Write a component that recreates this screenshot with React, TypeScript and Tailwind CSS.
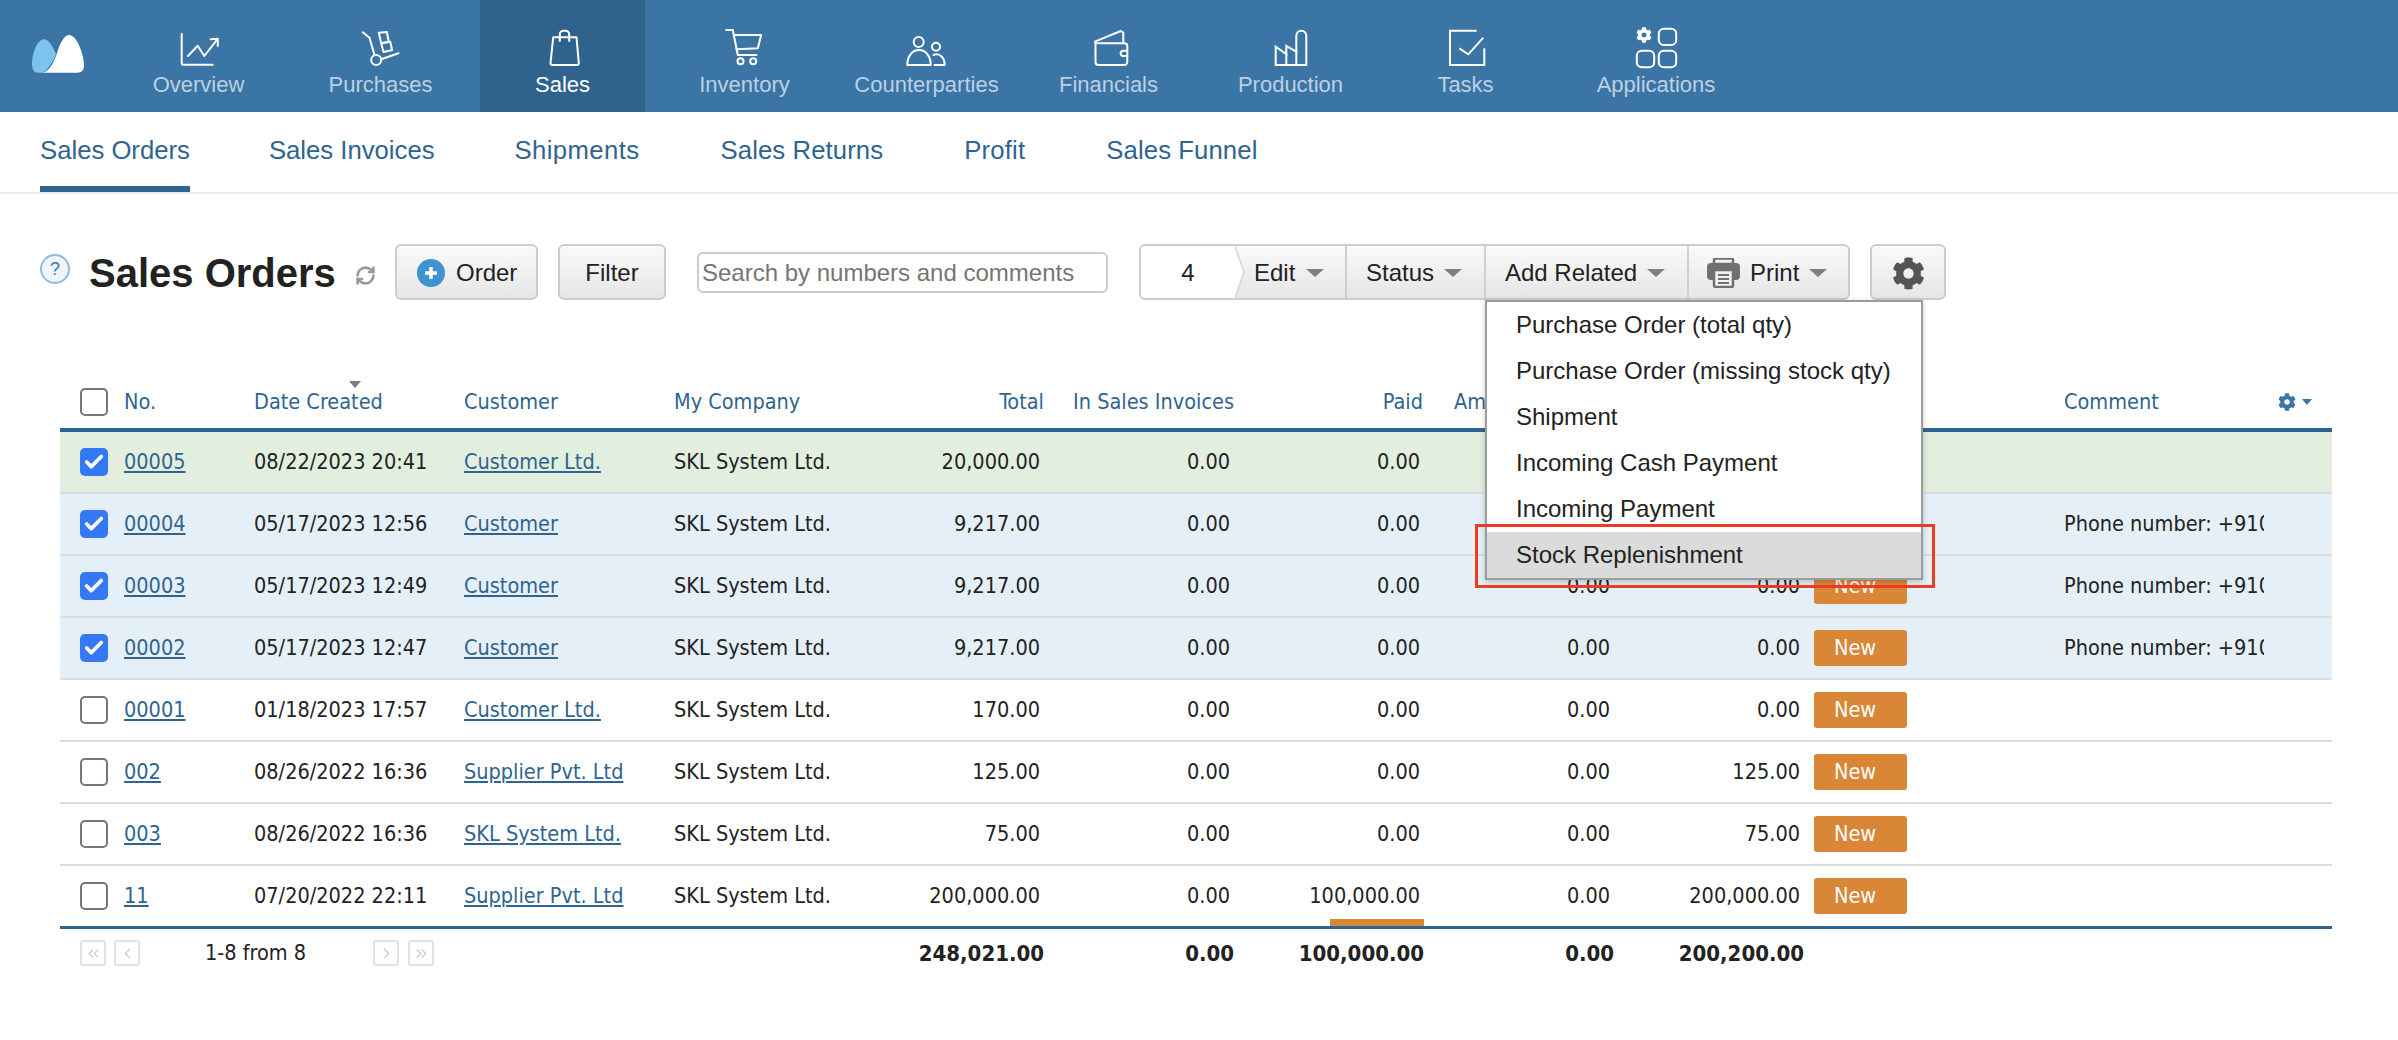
import { Check, ChevronLeft, ChevronRight, ChevronsLeft, ChevronsRight, RefreshCw } from "lucide-react";
import type { ReactNode } from "react";
import { FaCog } from "react-icons/fa";

const COLS = "grid grid-cols-[64px_130px_210px_210px_226px_150px_190px_190px_190px_190px_254px_268px]";

const line = { fill: "none", stroke: "#fff", strokeWidth: 2, strokeLinecap: "round", strokeLinejoin: "round" } as const;

const NAV: { label: string; width: string; active?: boolean; icon: ReactNode }[] = [
  {
    label: "Overview",
    width: "w-[165px]",
    icon: (
      <g {...line}>
        <path d="M-17.3 34V63.5a1.2 1.2 0 0 0 1.2 1.2H13.7" />
        <path d="M-11 56L-1.3 45.7L5.3 56L18.3 39.3" />
        <path d="M11.7 39.3L18.8 38.7V46" />
      </g>
    ),
  },
  {
    label: "Purchases",
    width: "w-[165px]",
    icon: (
      <g {...line}>
        <circle cx="-4.8" cy="60" r="5" />
        <path d="M-18.2 32.3L-11.5 37.7L-6.5 55" />
        <path d="M0.2 59.3L17.5 53.3" />
        <path d="M-2.2 32.7L5.8 32L7.8 41.7L0.2 43.3Z" />
        <path d="M0.2 43.3L9.2 41.7L11.2 50L2.5 52Z" />
      </g>
    ),
  },
  {
    label: "Sales",
    width: "w-[165px]",
    active: true,
    icon: (
      <g {...line}>
        <path d="M-9.8 37.3H13.5L15.8 63a2 2 0 0 1 -2 2H-10.5a2 2 0 0 1 -2 -2Z" />
        <path d="M-3.2 41V34.5a3.8 3.8 0 0 1 3.8 -3.8h1.8a3.8 3.8 0 0 1 3.8 3.8V41" />
      </g>
    ),
  },
  {
    label: "Inventory",
    width: "w-[165px]",
    icon: (
      <g {...line}>
        <path d="M-18.8 30H-12.2L-7.2 55H11.5" />
        <path d="M-11.2 35H16.2L12.8 48.3L-8.5 49.3" />
        <circle cx="-4.5" cy="61.3" r="3" />
        <circle cx="8.2" cy="61.3" r="3" />
      </g>
    ),
  },
  {
    label: "Counterparties",
    width: "w-[165px]",
    icon: (
      <g {...line}>
        <circle cx="-8.3" cy="42" r="5" />
        <path d="M-19.7 65C-19.7 56 -14.5 50 -8 50C-1.5 50 3.7 56 3.7 65Z" />
        <circle cx="9" cy="46.7" r="4" />
        <path d="M6.5 55C11 53 17.7 56 17.7 65H7.5" />
      </g>
    ),
  },
  {
    label: "Financials",
    width: "w-[165px]",
    icon: (
      <g {...line}>
        <path d="M-13.5 42V62a3 3 0 0 0 3 3H15.3a3 3 0 0 0 3 -3V46.3a3 3 0 0 0 -3 -3H-11.5" />
        <path d="M-14 41.7L11.7 31L14.3 32.7V42.7" />
        <path d="M18.3 50.7H14.3a2.6 2.6 0 0 0 0 5.3H18.3" />
      </g>
    ),
  },
  {
    label: "Production",
    width: "w-[165px]",
    icon: (
      <g {...line} strokeLinecap="square" strokeLinejoin="miter">
        <path d="M-15.3 65V46.7L-4.7 54V46L5.3 51.7V35.7a5 5 0 0 1 10 0V65Z" />
        <path d="M-4.7 54V65" />
        <path d="M5.3 51.7V65" />
      </g>
    ),
  },
  {
    label: "Tasks",
    width: "w-[151px]",
    icon: (
      <g {...line} strokeLinecap="butt" strokeLinejoin="miter">
        <path d="M10.7 30.7H-16V65H18.3V48.3" />
        <path d="M-6.7 48.3L2.3 54.3L17.3 37.7" />
      </g>
    ),
  },
  {
    label: "Applications",
    width: "w-[196px]",
    icon: (
      <>
        <FaCog x={-20} y={27} width={20} height={20} fill="#fff" />
        <g {...line}>
          <rect x="2.8" y="28.7" width="17.4" height="16.3" rx="5" />
          <rect x="-19.2" y="50.7" width="17.4" height="16.6" rx="5" />
          <rect x="2.8" y="50.7" width="17.4" height="16.6" rx="5" />
        </g>
      </>
    ),
  },
];

// gaps differ a little per tab, the original font has other advance widths
const TABS = [
  { label: "Sales Orders", cls: "" },
  { label: "Sales Invoices", cls: "ml-[79px]" },
  { label: "Shipments", cls: "ml-[80px] tracking-[0.4px]" },
  { label: "Sales Returns", cls: "ml-[81px] tracking-[0.1px]" },
  { label: "Profit", cls: "ml-[81px] tracking-[0.2px]" },
  { label: "Sales Funnel", cls: "ml-[81px] tracking-[0.1px]" },
];

const MENU = ["Purchase Order (total qty)", "Purchase Order (missing stock qty)", "Shipment", "Incoming Cash Payment", "Incoming Payment", "Stock Replenishment"];

const PHONE = "Phone number: +91012345678";

const ROWS = [
  { no: "00005", date: "08/22/2023 20:41", customer: "Customer Ltd.", total: "20,000.00", paid: "0.00", due: "0.00", checked: true, bg: "bg-[#e2efdf]", comment: "" },
  { no: "00004", date: "05/17/2023 12:56", customer: "Customer", total: "9,217.00", paid: "0.00", due: "0.00", checked: true, bg: "bg-[#e5eff8]", comment: PHONE },
  { no: "00003", date: "05/17/2023 12:49", customer: "Customer", total: "9,217.00", paid: "0.00", due: "0.00", checked: true, bg: "bg-[#e5eff8]", comment: PHONE },
  { no: "00002", date: "05/17/2023 12:47", customer: "Customer", total: "9,217.00", paid: "0.00", due: "0.00", checked: true, bg: "bg-[#e5eff8]", comment: PHONE },
  { no: "00001", date: "01/18/2023 17:57", customer: "Customer Ltd.", total: "170.00", paid: "0.00", due: "0.00", checked: false, bg: "", comment: "" },
  { no: "002", date: "08/26/2022 16:36", customer: "Supplier Pvt. Ltd", total: "125.00", paid: "0.00", due: "125.00", checked: false, bg: "", comment: "" },
  { no: "003", date: "08/26/2022 16:36", customer: "SKL System Ltd.", total: "75.00", paid: "0.00", due: "75.00", checked: false, bg: "", comment: "" },
  { no: "11", date: "07/20/2022 22:11", customer: "Supplier Pvt. Ltd", total: "200,000.00", paid: "100,000.00", due: "200,000.00", checked: false, bg: "", comment: "" },
];

function Caret() {
  return <span className="inline-block w-0 h-0 border-x-[9px] border-x-transparent border-t-[8px] border-t-[#808080]" />;
}

function Box({ checked }: { checked: boolean }) {
  if (checked) {
    return (
      <span className="ml-5 w-[28px] h-[28px] rounded-[5px] bg-[#3478f6] flex items-center justify-center">
        <Check size={22} strokeWidth={4} className="text-white" />
      </span>
    );
  }
  return <span className="ml-5 w-[28px] h-[28px] rounded-[5px] border-2 border-[#777] bg-white" />;
}

function PageBtn({ children, className }: { children: ReactNode; className: string }) {
  return <span className={`w-[26px] h-[26px] rounded-[3px] border-2 border-[#e2e2e2] flex items-center justify-center text-[#cfcfcf] ${className}`}>{children}</span>;
}

export default function App() {
  const btn = "h-[56px] rounded-[6px] border-2 border-[#ccc] bg-gradient-to-b from-[#fafafa] to-[#e6e6e6] flex items-center";
  return (
    <div className="relative w-[2398px] h-[1040px] overflow-hidden bg-white text-[#222] font-['Liberation_Sans',sans-serif]">
      <header className="h-[112px] bg-[#3a75a6] flex">
        <svg width="56" height="46" viewBox="30 30 56 46" className="ml-[30px] mt-[30px]">
          <path d="M38 72.7C33 72.7 32 68 32 64C32 54 37 39.3 44 39.3C49 39.3 53 47 56 54C52 64 46 72.7 41 72.7Z" fill="#7cc4ee" />
          <path d="M41.7 72.7C50 72 54 62 58 50C61 41 65 35 69.3 35C77 35 84 55 84 65C84 70 82 72.7 77 72.7Z" fill="#fff" />
        </svg>
        <nav className="ml-[30px] flex gap-[17px]">
          {NAV.map((n) => (
            <div key={n.label} className={`${n.width} h-[112px] pt-[25px] flex flex-col items-center ${n.active ? "bg-[#2f628d] text-white" : "text-[#bcd0e2]"}`}>
              <svg width="60" height="45" viewBox="-30 25 60 45">{n.icon}</svg>
              <span className="mt-[3px] text-[22px] leading-[24px] whitespace-nowrap">{n.label}</span>
            </div>
          ))}
        </nav>
      </header>

      <div className="h-[82px] border-b-2 border-[#ececec] pl-[40px] flex text-[25.7px] text-[#2f6490]">
        {TABS.map((t, i) => (
          <div key={t.label} className={`h-[80px] pt-[23px] leading-[30px] ${t.cls} ${i === 0 ? "border-b-[6px] border-[#2f6490]" : ""}`}>{t.label}</div>
        ))}
      </div>

      <div className="mt-[50px] pl-[40px] h-[56px] flex items-center text-[24px]">
        <span className="mb-[6px] w-[30px] h-[30px] rounded-full border-2 border-[#8dbcdf] bg-[#eef6fc] text-[#3a75a6] text-[18px] flex items-center justify-center">?</span>
        <h1 className="ml-[19px] mt-[2px] w-[245px] text-[40px] font-bold leading-[48px] whitespace-nowrap">Sales Orders</h1>
        <RefreshCw size={21} strokeWidth={3} className="ml-[21px] mt-[6px] text-[#999]" />
        <div className={`${btn} pt-[2px] ml-[19px] w-[143px] pl-[20px] gap-[11px]`}>
          <span className="w-[28px] h-[28px] rounded-full bg-[#3f93d0] flex items-center justify-center">
            <svg width="16" height="16" viewBox="0 0 16 16"><path d="M8 2V14M2 8H14" stroke="#fff" strokeWidth="3.5" /></svg>
          </span>
          <span>Order</span>
        </div>
        <div className={`${btn} pt-[2px] ml-[20px] w-[108px] justify-center`}>Filter</div>
        <input
          readOnly
          placeholder="Search by numbers and comments"
          className="ml-[31px] mt-[1px] w-[411px] h-[41px] rounded-[6px] border-2 border-[#ccc] pl-[3px] pt-[1px] outline-none placeholder:text-[#757575]"
        />
        <div className={`${btn} ml-[31px] w-[711px] overflow-hidden`}>
          <div className="w-[94px] h-full pt-[2px] bg-white flex items-center justify-center">4</div>
          <svg width="10" height="52" viewBox="0 0 10 52" className="shrink-0">
            <path d="M0 0L9 26L0 52Z" fill="#fff" />
            <path d="M0 0L9 26L0 52" fill="none" stroke="#d4d4d4" strokeWidth="1.5" />
          </svg>
          <div className="w-[100px] h-full pt-[2px] pl-[9px] flex items-center gap-[11px]">Edit <Caret /></div>
          <div className="w-[139px] h-full pt-[2px] pl-[19px] border-l-2 border-[#d0d0d0] flex items-center gap-[10px]">Status <Caret /></div>
          <div className="w-[203px] h-full pt-[2px] pl-[19px] border-l-2 border-[#d0d0d0] flex items-center gap-[10px]">Add Related <Caret /></div>
          <div className="flex-1 h-full pt-[2px] pl-[18px] border-l-2 border-[#d0d0d0] flex items-center gap-[10px]">
            <svg width="33" height="30" viewBox="0 0 33 30" className="shrink-0">
              <path d="M7 6V2a1.5 1.5 0 0 1 1.5 -1.5h16A1.5 1.5 0 0 1 26 2V6Z" fill="none" stroke="#707070" strokeWidth="2.5" />
              <rect x="0" y="5" width="33" height="17" rx="4" fill="#707070" />
              <rect x="7" y="12" width="19" height="17" rx="1.5" fill="#f1f1f1" stroke="#707070" strokeWidth="2.5" />
              <path d="M11 17H22M11 21H22M11 25H22" stroke="#707070" strokeWidth="1.8" />
            </svg>
            Print <Caret />
          </div>
        </div>
        <div className={`${btn} pt-[2px] ml-[20px] w-[76px] justify-center`}>
          <FaCog size={33} className="text-[#555]" />
        </div>
      </div>

      <div className="ml-[60px] w-[2272px] mt-[68px] font-['DejaVu_Sans_Condensed','Noto_Sans',sans-serif] text-[21.5px]">
        <div className={`${COLS} h-[64px] pt-[8px] border-b-4 border-[#2f6490] text-[#2f6490] items-center`}>
          <Box checked={false} />
          <span>No.</span>
          <span className="relative">
            Date Created
            <span className="absolute left-[95px] -top-[5px] w-0 h-0 border-x-[6px] border-x-transparent border-t-[7px] border-t-[#777c88]" />
          </span>
          <span>Customer</span>
          <span>My Company</span>
          <span className="text-right pr-[6px]">Total</span>
          <span className="text-right pr-[6px] whitespace-nowrap">In Sales Invoices</span>
          <span className="text-right pr-[7px]">Paid</span>
          <span className="pl-[24px]">Amount</span>
          <span />
          <span />
          <span className="flex items-center justify-end pr-[20px] gap-[6px]">
            <span className="mr-auto">Comment</span>
            <FaCog size={18} className="text-[#3a75a6]" />
            <span className="w-0 h-0 border-x-[5px] border-x-transparent border-t-[6px] border-t-[#3a75a6]" />
          </span>
        </div>

        {ROWS.map((r, i) => {
          const last = i === ROWS.length - 1;
          return (
            <div key={r.no} className={`${COLS} items-center ${r.bg} ${last ? "h-[63px] border-b-[3px] border-[#2f6490]" : "h-[62px] border-b-2 border-[#ddd]"}`}>
              <Box checked={r.checked} />
              <a className="text-[#2f6490] underline decoration-2 underline-offset-2">{r.no}</a>
              <span>{r.date}</span>
              <a className="text-[#2f6490] underline decoration-2 underline-offset-2 whitespace-nowrap">{r.customer}</a>
              <span className="whitespace-nowrap">SKL System Ltd.</span>
              <span className="text-right pr-[10px]">{r.total}</span>
              <span className="text-right pr-[10px]">0.00</span>
              <div className="relative self-stretch flex items-center justify-end pr-[10px]">
                {r.paid}
                {last && <span className="absolute right-[6px] bottom-0 w-[94px] h-[7px] bg-[#d98636]" />}
              </div>
              <span className="text-right pr-[10px]">0.00</span>
              <span className="text-right pr-[10px]">{r.due}</span>
              <span className="ml-[4px] w-[93px] h-[36px] rounded-[3px] bg-[#d98636] text-white pl-[20px] leading-[36px]">New</span>
              <span className="w-[200px] overflow-hidden whitespace-nowrap">{r.comment}</span>
            </div>
          );
        })}

        <div className={`${COLS} h-[48px] items-center`}>
          <span className="col-span-3 flex items-center">
            <PageBtn className="ml-5"><ChevronsLeft size={17} /></PageBtn>
            <PageBtn className="ml-[8px]"><ChevronLeft size={17} /></PageBtn>
            <span className="ml-[65px] w-[168px]">1-8 from 8</span>
            <PageBtn className=""><ChevronRight size={17} /></PageBtn>
            <PageBtn className="ml-[9px]"><ChevronsRight size={17} /></PageBtn>
          </span>
          <span />
          <span />
          <span className="text-right pr-[6px] font-bold text-[22px]">248,021.00</span>
          <span className="text-right pr-[6px] font-bold text-[22px]">0.00</span>
          <span className="text-right pr-[6px] font-bold text-[22px]">100,000.00</span>
          <span className="text-right pr-[6px] font-bold text-[22px]">0.00</span>
          <span className="text-right pr-[6px] font-bold text-[22px]">200,200.00</span>
        </div>
      </div>

      <div className="absolute left-[1485px] top-[300px] w-[438px] border-2 border-[#9c9c9c] bg-white text-[24px] shadow-[0_2px_6px_rgba(0,0,0,0.2)]">
        {MENU.map((m, i) => (
          <div key={m} className={`h-[46px] pl-[29px] leading-[46px] whitespace-nowrap ${i === MENU.length - 1 ? "bg-[#dbdbdb]" : ""}`}>{m}</div>
        ))}
      </div>
      <div className="absolute left-[1475px] top-[524px] w-[460px] h-[64px] border-[3px] border-[#ee3a24]" />
    </div>
  );
}
